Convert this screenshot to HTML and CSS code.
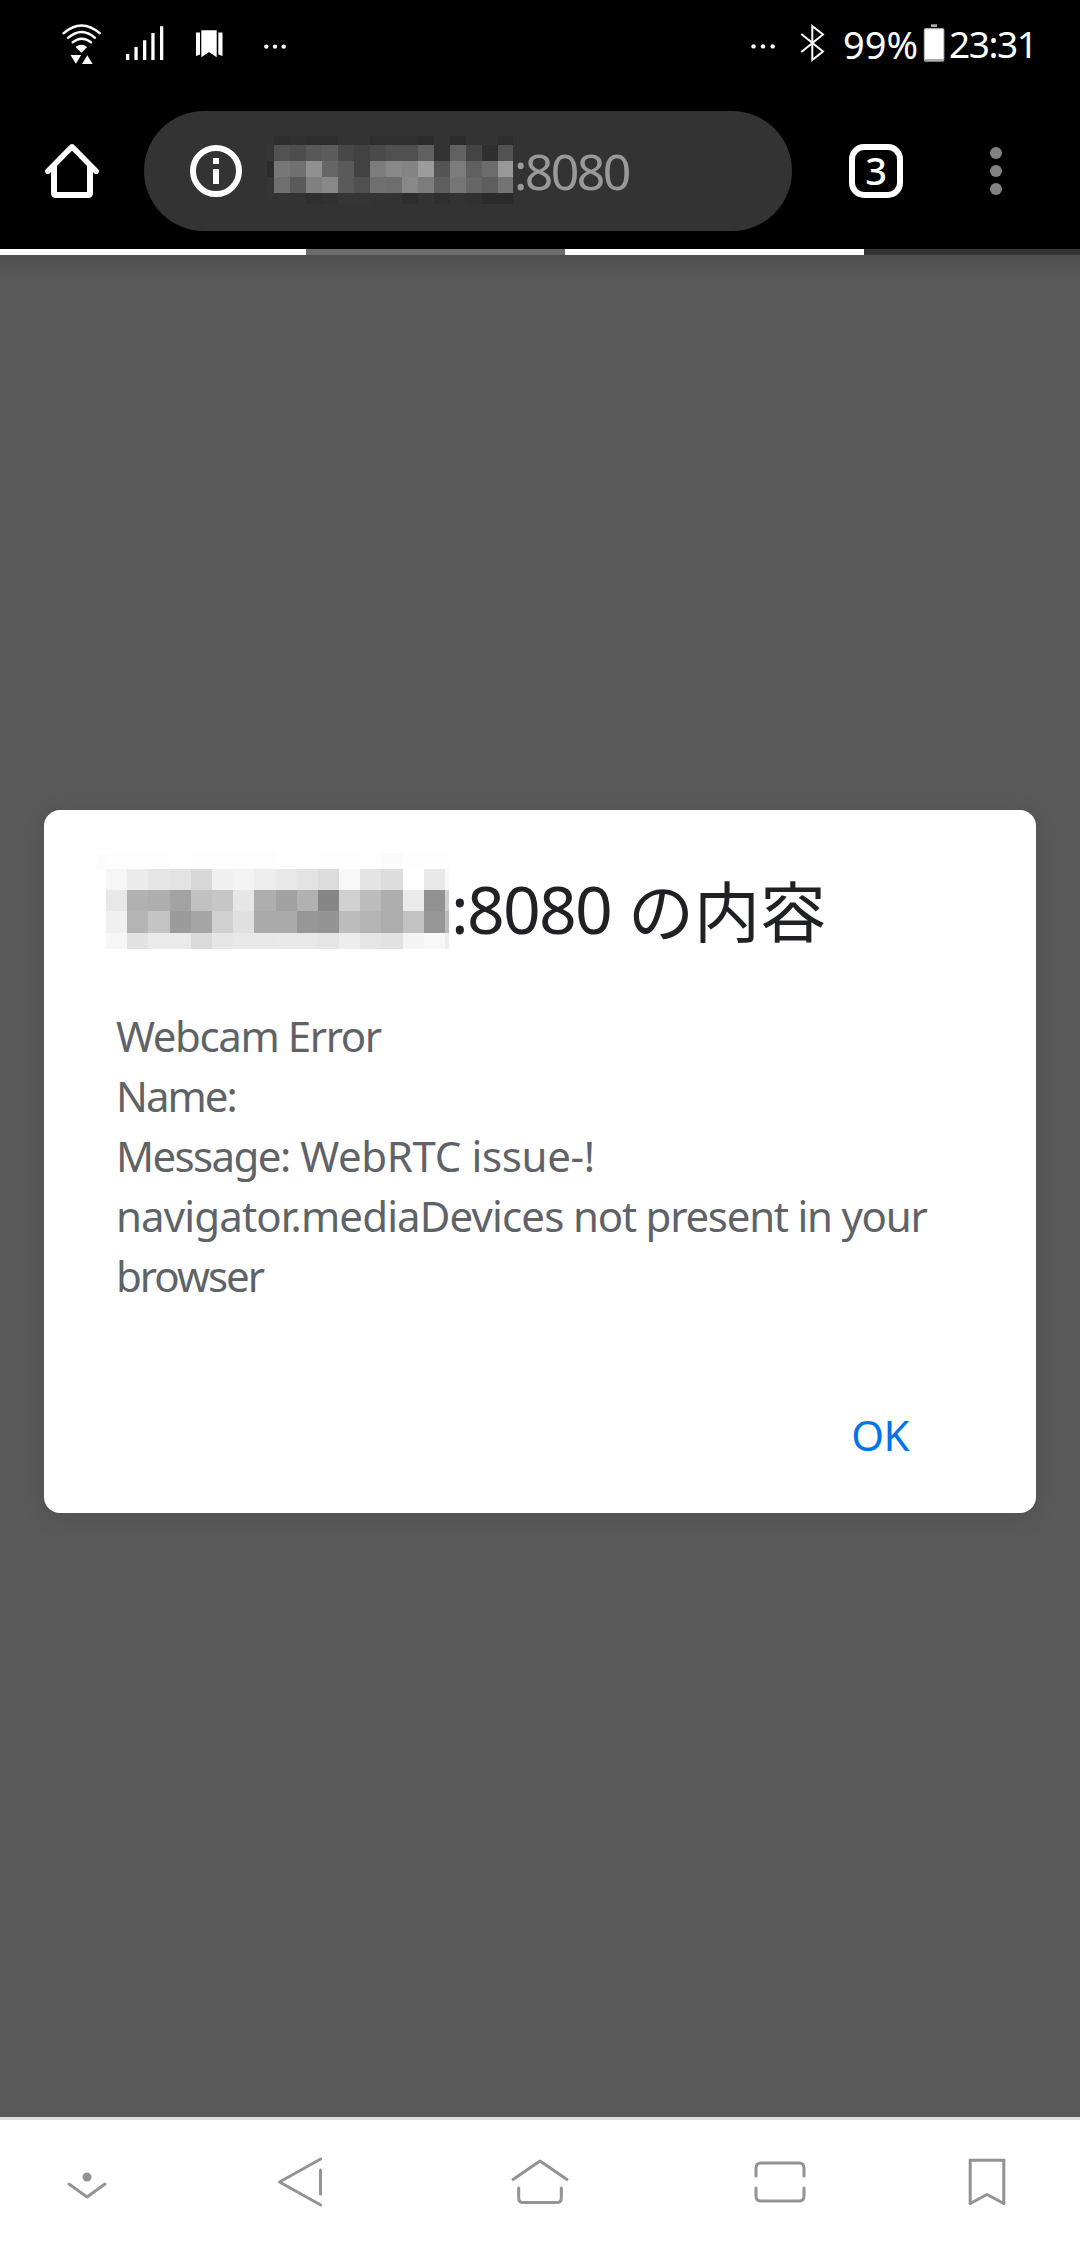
FILE: index.html
```html
<!DOCTYPE html>
<html lang="ja">
<head>
<meta charset="utf-8">
<title>:8080 の内容</title>
<link rel="stylesheet" href="styles.css">
</head>
<body>
<div class="screen">
  <header class="status">
    <svg class="status-left" viewBox="0 0 300 90" fill="#fff">
      <g fill="none" stroke="#fff" stroke-width="2.4" stroke-linecap="round">
        <path d="M63.5 33.3Q81.5 17.5 100 33.3"/>
        <path d="M68 37.8Q81.7 26 95 37.8"/>
        <path d="M72.7 42.3Q81.7 35 91 42.3"/>
      </g>
      <path d="M75.5 47Q81.5 42.3 87.2 47L81.5 52.7Z"/>
      <path d="M70.5 55H81.2L75.9 63.7ZM87.3 55.3L92.7 64H82Z"/>
      <path d="M126 54h3.3v6H126zM134.4 47h3.3v13h-3.3zM143 40.3h3.3V60H143zM151.3 33h3.3v27h-3.3zM160 26.3h3.3V60H160z"/>
      <path d="M196 32.5h4v22l-4 1.5zM218.3 32.5h4.2V56l-4.2-1.5zM201.3 30.3h15.4v27L209 52l-7.7 5.3z"/>
      <circle cx="266.3" cy="46.6" r="2.2"/><circle cx="275" cy="46.6" r="2.2"/><circle cx="283.7" cy="46.6" r="2.2"/>
    </svg>
    <div class="status-right">
      <svg class="bluetooth" viewBox="750 0 80 90">
        <g fill="#fff"><circle cx="753.5" cy="46.4" r="2.2"/><circle cx="763" cy="46.4" r="2.2"/><circle cx="772.7" cy="46.4" r="2.2"/></g>
        <path d="M801.3 34L823 51.5L812.3 60V26L823 34.5L801.3 52" fill="none" stroke="#fff" stroke-width="2"/>
      </svg>
      <span class="percent">99%</span>
      <svg class="battery" viewBox="923 0 24 90">
        <rect x="931" y="24.3" width="6" height="2.7" fill="#aaa"/>
        <rect x="923.8" y="28" width="20.6" height="33.7" rx="2" fill="#aaa"/>
        <rect x="924.8" y="29.3" width="18.6" height="29.7" fill="#fff"/>
      </svg>
      <span class="clock">23:31</span>
    </div>
  </header>

  <div class="toolbar">
    <svg class="home" viewBox="0 90 144 159" fill="none" stroke="#fff" stroke-linecap="round" stroke-linejoin="round">
      <path d="M47.8 171.2L72 146.8L96.2 171.2" stroke-width="5.5"/>
      <path d="M54 167V193Q54 195 56 195H88Q90 195 90 193V167" stroke-width="6"/>
    </svg>
    <div class="address">
      <svg class="info" viewBox="190 145 52 52">
        <circle cx="216" cy="171" r="23" fill="none" stroke="#fff" stroke-width="6"/>
        <path d="M213 158h6v6h-6zM213 169h6v15h-6z" fill="#fff"/>
      </svg>
      <div class="mosaic mosaic-url"></div>
      <span class="url">:8080</span>
    </div>
    <div class="tabs"><span class="tab-count">3</span></div>
    <div class="menu"><i></i><i></i><i></i></div>
  </div>

  <div class="progress"><i class="bar-a"></i><i class="bar-b"></i><i class="bar-c"></i><i class="bar-d"></i></div>

  <main class="page">
    <section class="dialog">
      <h1 class="title"><span class="mosaic mosaic-title"></span><span class="port">:8080</span><span class="suffix">の内容</span></h1>
      <div class="message">
        <p class="line-1">Webcam Error</p>
        <p class="line-2">Name:</p>
        <p class="line-3"><span class="label">Message:</span> WebRTC issue-!</p>
        <p class="line-4"><span class="api">navigator.mediaDevices</span> not present in your</p>
        <p class="line-5">browser</p>
      </div>
      <div class="actions"><span class="ok">OK</span></div>
    </section>
  </main>

  <nav class="nav">
    <svg width="174" viewBox="0 2120 174 126"><circle cx="87" cy="2177" r="4.5" fill="#939393" stroke="none"/><path d="M69 2184L87 2197L105 2184"/></svg>
    <svg width="252" viewBox="174 2120 252 126"><path d="M320.7 2159L279.5 2182L320.7 2205M320.5 2170V2194"/></svg>
    <svg width="228" viewBox="426 2120 228 126"><path d="M513 2179.5L540 2161L567 2179.5M518.7 2188V2198Q518.7 2202.6 523.3 2202.6H556.7Q561.3 2202.6 561.3 2198V2188"/></svg>
    <svg width="252" viewBox="654 2120 252 126"><path d="M756 2176V2168Q756 2163 761 2163H799Q804 2163 804 2168V2176M756 2188V2196Q756 2201 761 2201H799Q804 2201 804 2196V2188"/></svg>
    <svg width="162" viewBox="906 2120 162 126"><path stroke-linejoin="miter" d="M970.2 2203.5V2160.2H1003.8V2203.5"/><path d="M970.2 2203.5L987 2194.5L1003.8 2203.5"/></svg>
  </nav>
</div>
<script src="mosaic.js"></script>
</body>
</html>
```
FILE: styles.css
```css
* { box-sizing: border-box; }
body { margin: 0; background: #000; }
h1, p { margin: 0; font-weight: 400; }
svg { display: block; flex: none; }

.screen {
  width: 1080px;
  height: 2246px;
  display: flex;
  flex-direction: column;
  overflow: hidden;
  background: #000;
  font-family: "Noto Sans", "Noto Sans CJK JP", sans-serif;
}

.status { height: 90px; display: flex; justify-content: space-between; color: #fff; }
.status-left { width: 300px; height: 90px; }
.status-right { width: 330px; display: flex; font-size: 37px; line-height: 88px; letter-spacing: -1.4px; }
.bluetooth { width: 80px; height: 90px; }
.percent { width: 93px; padding-left: 13px; font-size: 38px; letter-spacing: 0; white-space: nowrap; }
.battery { width: 24px; height: 90px; }
.clock { padding-left: 2px; }

.toolbar { height: 159px; display: flex; align-items: center; }
.home { width: 144px; height: 159px; }
.address {
  width: 648px;
  height: 120px;
  margin-bottom: -3px;
  padding-left: 46px;
  display: flex;
  align-items: center;
  border-radius: 60px;
  background: #333;
}
.info { width: 52px; height: 52px; }
.url { margin-left: 1px; color: #999; font-size: 50px; line-height: 120px; letter-spacing: -2.6px; }
.tabs { width: 168px; display: flex; justify-content: center; margin-bottom: -3px; }
.tab-count {
  width: 54px;
  height: 54px;
  border: 6px solid #fff;
  border-radius: 15px;
  color: #fff;
  font-size: 38px;
  font-weight: 500;
  line-height: 40px;
  text-align: center;
}
.menu { width: 72px; display: flex; flex-direction: column; align-items: center; gap: 6px; margin-bottom: -3px; }
.menu i { width: 12px; height: 12px; border-radius: 50%; background: #828282; }

.progress { height: 6px; display: flex; flex: none; }
.bar-a { width: 306px; background: #fff; }
.bar-b { width: 259px; background: #6b6b6b; }
.bar-c { width: 299px; background: #fff; }
.bar-d { width: 216px; background: #333; }

.page {
  height: 1862px;
  padding: 555px 44px 0;
  background: linear-gradient(#4e4e4e, #595959 22px);
}
.dialog {
  height: 703px;
  padding: 43px 72px 0 53px;
  border-radius: 16px;
  background: #fff;
  box-shadow: 0 4px 24px rgba(0, 0, 0, .1);
}
.title { height: 96px; display: flex; color: #202124; font-size: 66px; line-height: 110px; white-space: nowrap; }
.port { margin-left: 2px; letter-spacing: -1.75px; }
.suffix { margin-left: 17px; font-size: 66px; font-family: "Noto Sans CJK JP", sans-serif; }
.message { margin: 57px 0 0 19px; color: #5f6368; font-size: 42px; line-height: 60px; white-space: nowrap; }
.line-1 { letter-spacing: -1.4px; }
.line-2 { letter-spacing: -2px; }
.line-3 { letter-spacing: -.35px; }
.label { letter-spacing: -1.6px; }
.line-4 { letter-spacing: -1.25px; }
.api { letter-spacing: -.86px; }
.line-5 { letter-spacing: -2px; }
.actions { margin-top: 99px; display: flex; justify-content: flex-end; padding-right: 55px; }
.ok { color: #0073e6; font-size: 42px; line-height: 60px; letter-spacing: -.5px; }

.nav { height: 129px; display: flex; border-top: 3px solid #dedede; background: #fff; }
.nav svg { height: 126px; fill: none; stroke: #939393; stroke-width: 3; stroke-linecap: round; stroke-linejoin: round; }

/* Pixelated host name */
.mosaic { display: grid; flex: none; }
.mosaic-url {
  width: 246px;
  margin-left: 25px;
  grid-template-columns: 7px repeat(14, 16px) 15px;
  grid-template-rows: 9px 16px 16px 16px 11px;
  margin-top: -2px;
}
.mosaic-title {
  width: 352px;
  height: 96px;
  grid-template-columns: 9px repeat(15, 21.2px) 20.7px 4.3px;
  grid-template-rows: 16px 21px 21px 22px 16px;
}
```
FILE: mosaic.js
```js
// Grey levels of the tiles, two hex digits each, row by row.
const tiles = {
  '.mosaic-url': [
    '33 2d 2f 2d 2d 33 33 2f 2f 2f 2c 33 2c 33 33 2d',
    '36 52 4d 57 5c 48 42 4a 50 50 60 33 62 44 2e 52',
    '2c 77 70 90 66 5a 42 7c 88 84 9c 55 7c 60 6c 98',
    '35 70 5a 80 88 5a 50 70 6e 88 7c 5e 76 66 5e 74',
    '34 33 33 2f 31 35 35 33 33 2e 33 2f 33 31 2b 2b'
  ],
  '.mosaic-title': [
    'fc fd fd fd ff fd fd fd fd ff ff fd fd ff fb fd fd fd',
    'ff f6 eb e6 e3 d7 f0 f4 ee e8 e3 dc f8 e4 dd ff e8 f9',
    'ff e8 b1 ae a3 c1 c6 e6 ae a2 b1 86 d0 bc ae ea 92 d0',
    'ff f0 b4 c4 9b a5 d0 e0 aa aa 97 94 bc b4 ad c2 96 bb',
    'ff f6 e2 ea ea da e6 e8 e8 e9 e9 e6 ed e5 e2 f4 f8 ee'
  ]
};
for (const [selector, rows] of Object.entries(tiles)) {
  const grid = document.querySelector(selector);
  for (const level of rows.join(' ').split(' ')) {
    const tile = document.createElement('i');
    tile.style.background = '#' + level.repeat(3);
    grid.append(tile);
  }
}
```
